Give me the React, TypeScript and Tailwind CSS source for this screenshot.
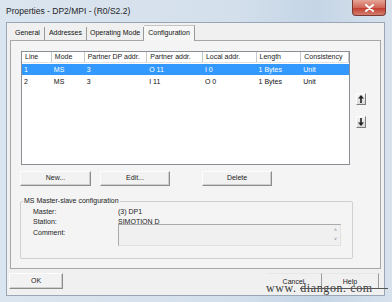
import React from "react";

const F = { fontFamily: '"Liberation Sans", Arial, sans-serif' };

function Btn({ children, className = "" }: { children: React.ReactNode; className?: string }) {
  return (
    <div
      className={
        "flex items-center justify-center text-[7px] text-[#222] bg-[#f2f2f2] border border-t-[#fdfdfd] border-l-[#fdfdfd] border-r-[#8c8c8c] border-b-[#8c8c8c] shadow-[inset_-1px_-1px_0_#cfcfcf] " +
        className
      }
    >
      {children}
    </div>
  );
}

function Arrow({ up }: { up: boolean }) {
  return (
    <div className="w-[10px] h-[12px] bg-[linear-gradient(#f4f4f4,#d8d8d8)] border border-t-[#ffffff] border-l-[#ffffff] border-r-[#7d7d7d] border-b-[#7d7d7d] flex items-center justify-center">
      <svg width="6" height="8" viewBox="0 0 6 8">
        {up ? (
          <g fill="#222">
            <polygon points="3,0 6,3.5 0,3.5" />
            <rect x="2.2" y="3" width="1.6" height="5" />
          </g>
        ) : (
          <g fill="#222">
            <polygon points="3,8 6,4.5 0,4.5" />
            <rect x="2.2" y="0" width="1.6" height="5" />
          </g>
        )}
      </svg>
    </div>
  );
}

const cols = [
  { name: "Line", w: 30 },
  { name: "Mode", w: 33 },
  { name: "Partner DP addr.", w: 63 },
  { name: "Partner addr.", w: 56 },
  { name: "Local addr.", w: 54 },
  { name: "Length", w: 45 },
  { name: "Consistency", w: 48 },
];

const rows = [
  ["1", "MS", "3", "O 11", "I 0", "1 Bytes", "Unit"],
  ["2", "MS", "3", "I 11", "O 0", "1 Bytes", "Unit"],
];

export default function App() {
  return (
    <div
      style={F}
      className="w-[392px] h-[302px] flex flex-col bg-[linear-gradient(90deg,#dbe5f0_0%,#d3dfeb_60%,#c5d5e6_80%,#d6e1ec_100%)] overflow-hidden relative"
    >
      {/* title bar */}
      <div className="h-[22px] flex items-start">
        <div className="pl-[6px] pt-[6px] text-[8.5px] leading-[10px] text-[#1e1e1e]">
          Properties - DP2/MPI - (R0/S2.2)
        </div>
        <div className="ml-auto mr-[6px] w-[34px] h-[16px] rounded-b-[4px] border border-t-0 border-[#7b3a33] bg-[linear-gradient(#e6a597,#d0685a_50%,#c0392b_51%,#d47f6e)] flex items-center justify-center">
          <svg width="9" height="8" viewBox="0 0 9 8">
            <path d="M1 1 L8 7 M8 1 L1 7" stroke="#ffffff" strokeWidth="2" strokeLinecap="round" />
          </svg>
        </div>
      </div>

      {/* body */}
      <div className="flex-1 flex pl-[6px] pr-[7px] pb-[6px]">
        <div className="flex-1 bg-[#f0f0f0] border border-[#98a6b5] flex flex-col pl-[3px] pr-[3px]">
          {/* tabs */}
          <div className="h-[17px] flex items-end text-[7px] text-[#111] pl-[1px]">
            <div className="h-[13px] px-[4px] flex items-center border-r border-[#9a9a9a]">General</div>
            <div className="h-[13px] px-[4px] flex items-center border-r border-[#9a9a9a]">Addresses</div>
            <div className="h-[13px] px-[3px] flex items-center border-r border-[#9a9a9a]">Operating Mode</div>
            <div className="h-[16px] px-[4px] flex items-center border-r border-[#9a9a9a] bg-[#f6f6f6] border-t border-t-[#c4c4c4] -mb-px relative z-10">
              Configuration
            </div>
          </div>

          {/* panel */}
          <div className="h-[229px] border border-[#a7a7a7] bg-[#f4f4f4] flex flex-col pl-[10px] pt-[10px]">
            <div className="flex">
              <div className="w-[329px] h-[114px] border border-[#8a8f96] bg-white">
                <div className="flex h-[11px] border-b border-[#e2e2e2]">
                  {cols.map((c) => (
                    <div
                      key={c.name}
                      style={{ width: c.w }}
                      className="text-[7px] leading-[10px] pl-[3px] border-r border-[#c8c8c8] text-[#222] whitespace-nowrap overflow-hidden"
                    >
                      {c.name}
                    </div>
                  ))}
                </div>
                {rows.map((r, i) => (
                  <div
                    key={i}
                    className={
                      "flex h-[11px] mt-px " + (i === 0 ? "bg-[#3399ff] text-white" : "text-[#111]")
                    }
                  >
                    {r.map((v, j) => (
                      <div
                        key={j}
                        style={{ width: cols[j].w }}
                        className="text-[7px] leading-[11px] pl-[2px] whitespace-nowrap"
                      >
                        {v}
                      </div>
                    ))}
                  </div>
                ))}
              </div>
              <div className="flex flex-col pl-[6px] pt-[42px] gap-[11px]">
                <Arrow up />
                <Arrow up={false} />
              </div>
            </div>

            {/* buttons */}
            <div className="flex mt-[6px] h-[15px]">
              <Btn className="w-[71px] ml-[-1px]">New...</Btn>
              <Btn className="w-[70px] ml-[9px]">Edit...</Btn>
              <Btn className="w-[70px] ml-[32px]">Delete</Btn>
            </div>

            {/* group */}
            <fieldset className="mt-[11px] w-[333px] ml-[-1px] h-[62px] border border-[#d0d0d0] rounded-[2px] pl-[12px]">
              <legend className="text-[7px] leading-[8px] text-[#222] ml-[-10px] px-[1px]">
                MS Master-slave configuration
              </legend>
              <div className="grid grid-cols-[85px_1fr] text-[7px] text-[#222] leading-[10px] pt-[2px]">
                <div>Master:</div>
                <div>(3) DP1</div>
                <div>Station:</div>
                <div>SIMOTION D</div>
                <div className="pt-[1px]">Comment:</div>
                <div className="mt-[-3px] w-[223px] h-[22px] border border-[#a9a9a9] border-r-[#e2e2e2] border-b-[#e2e2e2] bg-[#f0f0f0] flex justify-end pr-[3px]">
                  <div className="flex flex-col justify-between py-[3px] text-[#777] text-[5px] leading-[5px]">
                    <span>˄</span>
                    <span>˅</span>
                  </div>
                </div>
              </div>
            </fieldset>
          </div>

          {/* bottom buttons */}
          <div className="flex mt-[4px] h-[16px]">
            <Btn className="w-[54px] ml-[-1px]">OK</Btn>
            <div className="ml-auto flex h-[16px]">
              <div className="w-[56px] flex items-start pt-[3px] justify-center text-[7px] text-[#222] border-r border-[#9a9a9a] border-t border-t-[#e6e6e6]">
                Cancel
              </div>
              <div className="w-[57px] flex items-start pt-[3px] justify-center text-[7px] text-[#222] border-r border-[#9a9a9a] border-t border-t-[#e6e6e6] mr-[2px]">
                Help
              </div>
            </div>
          </div>
        </div>
      </div>

      {/* watermark overlay */}
      <div
        className="absolute left-[266px] top-[282px] text-[12px] leading-[13px] text-[#3a3a3a] tracking-[0.6px] whitespace-nowrap"
        style={{ fontFamily: '"Liberation Serif", "Times New Roman", serif' }}
      >
        www. diangon. com
      </div>
      <div className="absolute left-[300px] top-[288px] w-[88px] h-px bg-[#555]" />
    </div>
  );
}
